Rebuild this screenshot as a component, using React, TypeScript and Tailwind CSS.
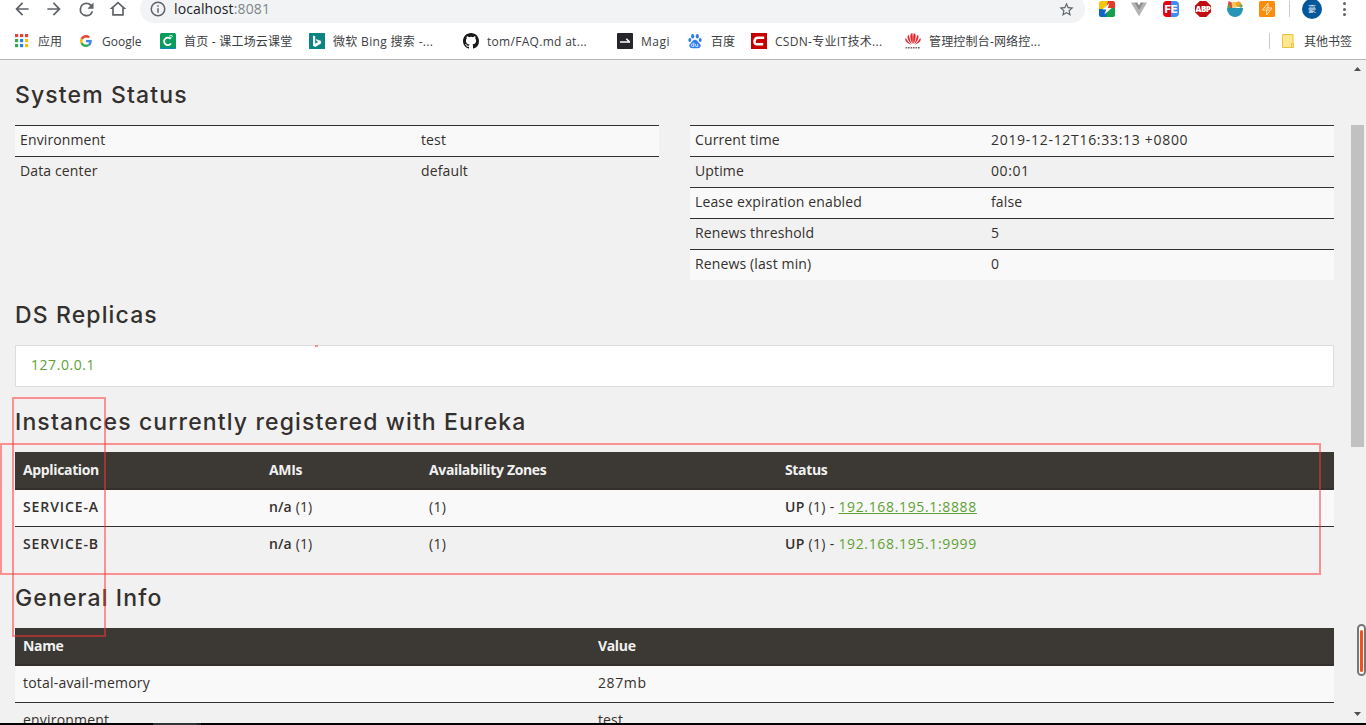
import type { ReactNode } from 'react';

type Row = { label: string; value: string; valueClass?: string };

const ENVIRONMENT: Row[] = [
  { label: 'Environment', value: 'test' },
  { label: 'Data center', value: 'default' },
];

const RUNTIME: Row[] = [
  { label: 'Current time', value: '2019-12-12T16:33:13 +0800', valueClass: 'tracking-[0.7px]' },
  { label: 'Uptime', value: '00:01', valueClass: 'tracking-[0.6px]' },
  { label: 'Lease expiration enabled', value: 'false' },
  { label: 'Renews threshold', value: '5' },
  { label: 'Renews (last min)', value: '0' },
];

const INSTANCES = [
  { name: 'SERVICE-A', link: '192.168.195.1:8888', hovered: true },
  { name: 'SERVICE-B', link: '192.168.195.1:9999', hovered: false },
];

const GENERAL: Row[] = [
  { label: 'total-avail-memory', value: '287mb', valueClass: 'tracking-[0.6px]' },
  { label: 'environment', value: 'test' },
];

function AppsIcon() {
  const colors = ['#ea4335', '#ea4335', '#ea4335', '#34a853', '#1e88e5', '#fbbc05', '#34a853', '#1e88e5', '#fbbc05'];
  return (
    <svg width="16" height="16" viewBox="0 0 16 16">
      {colors.map((c, i) => (
        <rect key={i} x={1 + (i % 3) * 5} y={1 + Math.floor(i / 3) * 5} width="3.2" height="3.2" fill={c} />
      ))}
    </svg>
  );
}

function GoogleIcon() {
  return (
    <svg width="16" height="16" viewBox="-8 -8 64 64">
      <path fill="#EA4335" d="M24 9.5c3.54 0 6.71 1.22 9.21 3.6l6.85-6.85C35.9 2.38 30.47 0 24 0 14.62 0 6.51 5.38 2.56 13.22l7.98 6.19C12.43 13.72 17.74 9.5 24 9.5z" />
      <path fill="#4285F4" d="M46.98 24.55c0-1.57-.15-3.09-.38-4.55H24v9.02h12.94c-.58 2.96-2.26 5.48-4.78 7.18l7.73 6c4.51-4.18 7.09-10.36 7.09-17.65z" />
      <path fill="#FBBC05" d="M10.53 28.59c-.48-1.45-.76-2.99-.76-4.59s.27-3.14.76-4.59l-7.98-6.19C.92 16.46 0 20.12 0 24c0 3.88.92 7.54 2.56 10.78l7.97-6.19z" />
      <path fill="#34A853" d="M24 48c6.48 0 11.93-2.13 15.89-5.81l-7.73-6c-2.15 1.45-4.92 2.3-8.16 2.3-6.26 0-11.57-4.22-13.47-9.91l-7.98 6.19C6.51 42.62 14.62 48 24 48z" />
    </svg>
  );
}

function ClassroomIcon() {
  return (
    <svg width="16" height="16" viewBox="0 0 16 16">
      <rect width="16" height="16" rx="1.5" fill="#0b9b5a" />
      <path d="M.3 15.2h15.4" stroke="#0a83c9" strokeWidth="1.2" />
      <path d="M10.6 6A3.7 3.7 0 1 0 10.9 10.4" fill="none" stroke="#fff" strokeWidth="1.8" />
      <path d="M9 3.4c1.3-1.3 2.900-1.100 4 .4M10.200 4.900c.6-.6 1.200-.5 1.700.1" fill="none" stroke="#fff" strokeWidth=".9" />
    </svg>
  );
}

function BingIcon() {
  return (
    <svg width="16" height="16" viewBox="0 0 16 16">
      <rect width="16" height="16" fill="#0c8484" />
      <path d="M4 2.5l2.2.8v7.400l3-1.700-1.500-.7-.9-2.300 5.300 1.900v2.600L6.200 14 4 12.700z" fill="#fff" />
    </svg>
  );
}

function GithubIcon() {
  return (
    <svg width="16" height="16" viewBox="0 0 16 16">
      <path fill="#191717" d="M8 0C3.58 0 0 3.58 0 8c0 3.54 2.29 6.53 5.47 7.59.4.07.55-.17.55-.38 0-.19-.01-.82-.01-1.49-2.01.37-2.53-.49-2.69-.94-.09-.23-.48-.94-.82-1.13-.28-.15-.68-.52-.01-.53.63-.01 1.08.58 1.23.82.72 1.21 1.87.87 2.33.66.07-.52.28-.87.51-1.07-1.78-.2-3.64-.89-3.64-3.95 0-.87.31-1.59.82-2.15-.08-.2-.36-1.02.08-2.12 0 0 .67-.21 2.2.82a7.6 7.6 0 0 1 4 0c1.53-1.04 2.2-.82 2.2-.82.44 1.1.16 1.92.08 2.12.51.56.82 1.27.82 2.15 0 3.07-1.87 3.75-3.65 3.95.29.25.54.73.54 1.48 0 1.07-.01 1.93-.01 2.2 0 .21.15.46.55.38A8.01 8.01 0 0 0 16 8c0-4.42-3.58-8-8-8z" />
    </svg>
  );
}

function MagiIcon() {
  return (
    <svg width="16" height="16" viewBox="0 0 16 16">
      <rect width="16" height="16" rx="1" fill="#26262b" />
      <path d="M3 9h10M9.300 5.700L12.400 8.800" stroke="#fff" strokeWidth="1.500" />
    </svg>
  );
}

function BaiduIcon() {
  return (
    <svg width="16" height="16" viewBox="0 0 16 16" fill="#2f7df0">
      <ellipse cx="5.700" cy="3.300" rx="1.600" ry="2.200" />
      <ellipse cx="10.300" cy="3.300" rx="1.600" ry="2.200" />
      <ellipse cx="2.800" cy="7" rx="1.500" ry="2" />
      <ellipse cx="13.200" cy="7" rx="1.500" ry="2" />
      <path d="M8 6.800c2 0 2.600 1.800 3.800 3 1.500 1.300 2.200 2.300 1.700 4-.5 1.500-2 1.500-5.500 1.500s-5 0-5.500-1.500c-.5-1.700.2-2.700 1.700-4 1.200-1.200 1.800-3 3.800-3z" />
      <path d="M6.900 9.500v4H5.500a1.200 1.200 0 0 1 0-2.400h1.400M8.600 11v1.800c0 .6.300.7.800.7h1.300V11" fill="none" stroke="#fff" strokeWidth=".8" />
    </svg>
  );
}

function CsdnIcon() {
  return (
    <svg width="16" height="16" viewBox="0 0 16 16">
      <rect width="16" height="16" fill="#c60000" />
      <path d="M13.200 4.800H7C5 4.800 3.700 6.300 3.500 8.200 3.300 10 4.200 11.300 6 11.300h6.200" fill="none" stroke="#fff" strokeWidth="2.500" />
    </svg>
  );
}

function HuaweiIcon() {
  return (
    <svg width="16" height="16" viewBox="0 0 16 16">
      <g fill="#e8242c">
        <path d="M7.600 11C6 8 4.800 4.500 5.500 1.500 5.800.5 6.800.2 7.400.2c.5 3 .5 7 .2 10.800zM8.400 11c1.600-3 2.800-6.500 2.100-9.500C10.200.5 9.200.2 8.600.2c-.5 3-.5 7-.2 10.800z" />
        <path d="M6.900 11.200C4.200 9 2.300 6 2.500 3.400c.1-.8.800-1.300 1.300-1.500.7 3.600 1.700 6.300 3.100 9.300zM9.100 11.200c2.700-2.200 4.600-5.200 4.400-7.800-.1-.8-.8-1.300-1.300-1.500-.7 3.600-1.700 6.300-3.100 9.300z" />
        <path d="M6.300 11.700C3 10.800.5 9 .2 6.600c0-.8.3-1.300.7-1.700 1.500 2.900 3 4.800 5.400 6.800zM9.700 11.700c3.300-.9 5.800-2.700 6.100-5.100 0-.8-.3-1.300-.7-1.700-1.500 2.900-3 4.800-5.400 6.800z" />
      </g>
      <path d="M.5 14.700h15" stroke="#77676a" strokeWidth="1.600" strokeDasharray="1.700 .8" />
    </svg>
  );
}

const BOOKMARKS: { label: string; icon: ReactNode; className: string }[] = [
  { label: '应用', icon: <AppsIcon />, className: 'w-16' },
  { label: 'Google', icon: <GoogleIcon />, className: 'w-[82px]' },
  { label: '首页 - 课工场云课堂', icon: <ClassroomIcon />, className: 'w-[149px] tracking-[0.22px]' },
  { label: '微软 Bing 搜索 -...', icon: <BingIcon />, className: 'w-[154px] tracking-[0.33px]' },
  { label: 'tom/FAQ.md at...', icon: <GithubIcon />, className: 'w-[154px] tracking-[0.3px]' },
  { label: 'Magi', icon: <MagiIcon />, className: 'w-[70px] tracking-[0.5px]' },
  { label: '百度', icon: <BaiduIcon />, className: 'w-16' },
  { label: 'CSDN-专业IT技术...', icon: <CsdnIcon />, className: 'w-[154px] tracking-[0.3px]' },
  { label: '管理控制台-网络控...', icon: <HuaweiIcon />, className: 'w-[154px] tracking-[0.18px]' },
];

function ToolIcon({ d, size = 'size-5' }: { d: string; size?: string }) {
  return (
    <div className="flex w-8 shrink-0 justify-center">
      <svg viewBox="0 0 24 24" className={`${size} shrink-0`} fill="#5f6368">
        <path d={d} />
      </svg>
    </div>
  );
}

function Extensions() {
  return (
    <div className="flex items-center gap-4">
      <svg width="16" height="16" viewBox="0 0 16 16">
        <path d="M2 0h7v8H0V2a2 2 0 0 1 2-2z" fill="#f6c40a" />
        <path d="M9 0h5a2 2 0 0 1 2 2v5H7z" fill="#e5392a" />
        <path d="M0 8h8v8H2a2 2 0 0 1-2-2z" fill="#0b66c8" />
        <path d="M9 7h7v7a2 2 0 0 1-2 2H7z" fill="#14a04a" />
        <path d="M10.500 2L3.500 8.500h3.700L5.300 13.500l7.500-6.500H8.800z" fill="#fff" />
      </svg>
      <svg width="16" height="16" viewBox="0 0 16 16">
        <path d="M0 1.500h3.300L8 9.600l4.700-8.100H16L8 15.300z" fill="#b3b3b3" />
        <path d="M3.300 1.500h3L8 4.500l1.700-3h3L8 9.600z" fill="#8c8c8c" />
      </svg>
      <div className="flex size-4 items-center justify-center rounded-sm bg-linear-to-r from-[#e60012] from-50% to-[#3f8cf5] to-50% font-['Inter'] text-[11px] leading-none font-extrabold text-white">
        FE
      </div>
      <div className="flex size-4 items-center justify-center bg-[#c00d12] font-['Open_Sans'] text-[8px] leading-none font-extrabold tracking-[-0.5px] text-white [clip-path:polygon(30%_0,70%_0,100%_30%,100%_70%,70%_100%,30%_100%,0_70%,0_30%)]">
        ABP
      </div>
      <svg width="16" height="16" viewBox="0 0 16 16">
        <path d="M1.500 0l4 2v5H.5z" fill="#d84a3e" />
        <circle cx="2" cy="5.500" r="1.500" fill="#5aa64d" />
        <circle cx="7.500" cy="3.500" r="2.800" fill="#f7c552" />
        <circle cx="11.500" cy="3.300" r="2.800" fill="#f0a22f" />
        <circle cx="8" cy="6" r="1.500" fill="#e8d27a" />
        <circle cx="14" cy="5" r="1.700" fill="#62ad57" />
        <path d="M0 7h16c0 5-3.400 9-8 9S0 12 0 7z" fill="#2795b3" />
      </svg>
      <svg width="16" height="16" viewBox="0 0 16 16">
        <rect width="16" height="16" rx="1.500" fill="#fb8c0c" />
        <path d="M9 2L3.500 9h4.200v5L13 7H9zM9 7H6.500M7.700 9h2.800" fill="none" stroke="#fff2d8" strokeWidth=".9" />
      </svg>
    </div>
  );
}

function BrowserBar() {
  return (
    <header className="h-[60px] shrink-0 overflow-hidden border-b border-[#b6b4b6] bg-white">
      <div className="-mt-[5px] flex h-7 items-center pl-1.5">
        <ToolIcon d="M20 11H7.830l5.590-5.590L12 4l-8 8 8 8 1.410-1.410L7.830 13H20v-2z" />
        <ToolIcon d="M12 4l-1.410 1.410L16.170 11H4v2h12.170l-5.580 5.590L12 20l8-8z" />
        <ToolIcon
          size="size-[21px]"
          d="M17.650 6.350A7.958 7.958 0 0 0 12 4a8 8 0 1 0 7.730 10h-2.080A6 6 0 1 1 12 6c1.660 0 3.140.690 4.220 1.780L13 11h7V4l-2.350 2.350z"
        />
        <ToolIcon d="M12 5.690l5 4.500V18H7v-7.810l5-4.500M12 3L2 12h3v8h14v-8h3z" />
        <div className="ml-1.5 flex h-7 w-[945px] items-center rounded-full bg-[#f1f3f4] pr-2.5 pl-[9px]">
          <svg viewBox="0 0 24 24" className="size-[18px]" fill="#5f6368">
            <path d="M11 7h2v2h-2zm0 4h2v6h-2zm1-9a10 10 0 1 0 0 20 10 10 0 0 0 0-20zm0 18a8 8 0 1 1 0-16 8 8 0 0 1 0 16z" />
          </svg>
          <div className="ml-[7px] grow text-sm leading-5 tracking-[0.12px] text-[#202124]">
            localhost<span className="text-[#80868b]">:8081</span>
          </div>
          <svg viewBox="0 0 24 24" className="size-[17px]" fill="#5f6368">
            <path d="M22 9.240l-7.190-.620L12 2 9.190 8.630 2 9.240l5.460 4.730L5.820 21 12 17.270 18.180 21l-1.630-7.030L22 9.240zM12 15.400l-3.760 2.270 1-4.280-3.320-2.880 4.380-.380L12 6.100l1.710 4.040 4.380.380-3.320 2.880 1 4.280L12 15.400z" />
          </svg>
        </div>
        <div className="ml-3.5">
          <Extensions />
        </div>
        <div className="ml-3.5 h-4 w-px bg-[#c8cacc]" />
        <div className="ml-3 flex size-5 items-center justify-center rounded-full bg-[#01579b] text-[8px] leading-none text-white">
          豪
        </div>
        <div className="ml-[21px] flex flex-col gap-[2.500px]">
          <i className="size-[3px] rounded-full bg-[#5f6368]" />
          <i className="size-[3px] rounded-full bg-[#5f6368]" />
          <i className="size-[3px] rounded-full bg-[#5f6368]" />
        </div>
      </div>

      <div className="flex h-9 items-center px-3.5 text-xs text-[#3c4043]">
        {BOOKMARKS.map((b) => (
          <div key={b.label} className={`flex shrink-0 items-center gap-2 whitespace-nowrap ${b.className}`}>
            {b.icon}
            <span className="pt-0.5">{b.label}</span>
          </div>
        ))}
        <div className="ml-auto flex items-center">
          <div className="h-4 w-px bg-[#c8cacc]" />
          <svg width="12" height="14" viewBox="0 0 12 14" className="ml-3">
            <path d="M.5.500h10.500v13H.5z" fill="#ffe791" stroke="#e8c33e" />
            <path d="M9.500 9.500h2v4h-2z" fill="#ffe791" stroke="#e8c33e" />
          </svg>
          <span className="ml-2.5 pt-0.5">其他书签</span>
        </div>
      </div>
    </header>
  );
}

function Heading({ children }: { children: ReactNode }) {
  return (
    <h1 className="h-[65px] pt-5 font-['Inter'] text-[23px] leading-[30px] font-medium tracking-[1.13px] whitespace-nowrap text-[#34302d]">
      {children}
    </h1>
  );
}

function StatusTable({ rows, labelWidth }: { rows: Row[]; labelWidth: string }) {
  return (
    <div className="w-[644px]">
      {rows.map((row) => (
        <div key={row.label} className="flex h-[31px] border-t border-[#34302d] px-[5px] pt-1 leading-5 odd:bg-[#f9f9f9]">
          <div className={labelWidth}>{row.label}</div>
          <div className={row.valueClass}>{row.value}</div>
        </div>
      ))}
    </div>
  );
}

const headRow = 'flex h-[38px] border-b-2 border-[#34302d] bg-[#3c3834] px-2 pt-2 font-bold leading-5 tracking-[-0.35px] text-[#f1f1f1]';
const bodyRow = 'flex h-[37px] border-t border-[#34302d] px-2 pt-[7px] leading-5 first:h-9 first:border-t-0 odd:bg-[#f9f9f9]';

export default function App() {
  return (
    <div className="relative flex h-[725px] w-[1366px] flex-col overflow-hidden bg-[#f1f1f1] font-['Open_Sans','Noto_Sans_CJK_SC',sans-serif]">
      <BrowserBar />

      <div className="flex min-h-0 grow">
        <main className="w-[1349px] overflow-hidden px-[15px] text-sm tracking-[0.13px] text-[#34302d]">
          <Heading>System Status</Heading>
          <div className="flex w-[1319px] items-start justify-between">
            <StatusTable rows={ENVIRONMENT} labelWidth="w-[401px]" />
            <StatusTable rows={RUNTIME} labelWidth="w-[296px]" />
          </div>

          <Heading>DS Replicas</Heading>
          <div className="h-[42px] border border-[#dddddd] bg-white px-[15px] pt-[9px] leading-5 tracking-[0.55px] text-[#5fa134]">
            127.0.0.1
          </div>

          <Heading>Instances currently registered with Eureka</Heading>
          <div>
            <div className={headRow}>
              <div className="w-[246px]">Application</div>
              <div className="w-[160px]">AMIs</div>
              <div className="w-[356px]">Availability Zones</div>
              <div>Status</div>
            </div>
            <div>
              {INSTANCES.map((it) => (
                <div key={it.name} className={bodyRow}>
                  <div className="w-[246px] font-semibold tracking-[0.9px]">{it.name}</div>
                  <div className="w-[160px]">
                    <b className="font-semibold">n/a</b> (1)
                  </div>
                  <div className="w-[356px] tracking-[0.3px]">(1)</div>
                  <div className="tracking-[0.3px]">
                    <b className="font-semibold">UP</b> (1) -{' '}
                    <a className={`tracking-[0.65px] text-[#5fa134] ${it.hovered ? 'underline' : ''}`}>{it.link}</a>
                  </div>
                </div>
              ))}
            </div>
          </div>

          <Heading>General Info</Heading>
          <div>
            <div className={headRow}>
              <div className="w-[575px]">Name</div>
              <div>Value</div>
            </div>
            <div>
              {GENERAL.map((row) => (
                <div key={row.label} className={bodyRow}>
                  <div className="w-[575px] tracking-[0.2px]">{row.label}</div>
                  <div className={row.valueClass}>{row.value}</div>
                </div>
              ))}
            </div>
          </div>
        </main>

        <div className="flex w-[17px] flex-col items-center">
          <svg width="7" height="4" viewBox="0 0 7 4" className="mt-[7px] shrink-0">
            <path d="M3.500 0L7 4H0z" fill="#505050" />
          </svg>
          <div className="mt-[54px] h-[322px] w-[13px] shrink-0 bg-[#c1c1c1]" />
          <svg width="7" height="4" viewBox="0 0 7 4" className="mt-auto mb-[7px] shrink-0">
            <path d="M3.500 4L7 0H0z" fill="#505050" />
          </svg>
        </div>
      </div>

      <div className="flex h-0.5 shrink-0 bg-black">
        <div className="ml-[153px] w-[44px] bg-[#333333]" />
        <div className="w-1 bg-[#222222]" />
      </div>

      {/* annotation marks drawn over the page */}
      <div className="absolute top-[397px] left-3 h-[240px] w-[94px] border-2 border-[#ff3333]/50" />
      <div className="absolute top-[443px] left-0 h-[132px] w-[1321px] border-2 border-[#ff3333]/50" />
      <div className="absolute top-[345px] left-[315px] h-0.5 w-[3px] bg-[#ff3333]/50" />
      <div className="absolute top-[624px] left-[1357px] flex h-[52px] w-[9px] justify-center rounded-full border-2 border-[#777777] bg-white pt-1 pb-0.5">
        <div className="w-[3px] rounded-full bg-[#f4511e]" />
      </div>
    </div>
  );
}
